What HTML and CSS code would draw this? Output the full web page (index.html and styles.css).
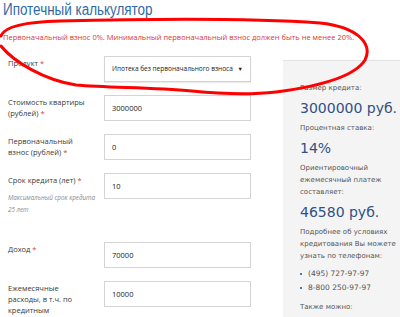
FILE: index.html
```html
<!DOCTYPE html>
<html lang="ru">
<head>
    <meta charset="utf-8">
    <title>Ипотечный калькулятор</title>
    <link rel="stylesheet" href="styles.css">
</head>
<body>
    <div class="page">
        <h1 class="title"><span>Ипотечный калькулятор</span></h1>
        <p class="error">Первоначальный взнос 0%. Минимальный первоначальный взнос должен быть не менее 20%.</p>

        <div class="main">
            <div class="form">
                <div class="row">
                    <label class="lbl">Продукт <span class="req">*</span></label>
                    <div class="select"><span>Ипотека без первоначального взноса</span><span class="arrow">&#9660;</span></div>
                </div>
                <div class="row">
                    <label class="lbl">Стоимость квартиры (рублей) <span class="req">*</span></label>
                    <div class="input">3000000</div>
                </div>
                <div class="row">
                    <label class="lbl">Первоначальный взнос (рублей) <span class="req">*</span></label>
                    <div class="input">0</div>
                </div>
                <div class="row row-hint">
                    <div class="lbl">
                        <label>Срок кредита (лет) <span class="req">*</span></label>
                        <p class="hint">Максимальный срок кредита<br>25 лет</p>
                    </div>
                    <div class="input">10</div>
                </div>
                <div class="row">
                    <label class="lbl">Доход <span class="req">*</span></label>
                    <div class="input">70000</div>
                </div>
                <div class="row">
                    <label class="lbl">Ежемесячные расходы, в т.ч. по кредитным обязательствам <span class="req">*</span></label>
                    <div class="input">10000</div>
                </div>
            </div>

            <div class="side">
                <p class="s-text">Размер кредита:</p>
                <p class="s-big">3000000 руб.</p>
                <p class="s-text">Процентная ставка:</p>
                <p class="s-big">14%</p>
                <p class="s-text">Ориентировочный ежемесячный платеж составляет:</p>
                <p class="s-big">46580 руб.</p>
                <p class="s-text">Подробнее об условиях кредитования Вы можете узнать по телефонам:</p>
                <ul class="phones">
                    <li>(495) 727-97-97</li>
                    <li>8-800 250-97-97</li>
                </ul>
                <p class="s-text">Также можно:</p>
            </div>
        </div>

        <svg class="scribble" width="400" height="110" viewBox="0 0 400 110">
            <path d="M 1,36 C 4,27 22,22 60,21 C 140,19 250,18 320,23 C 358,27 373,44 365,60 C 355,76 322,86 276,92 C 250,95 222,94 192,91 C 150,87 110,88 76,85 C 44,80 14,62 1,46"
                  fill="none" stroke="#ff0000" stroke-width="3" stroke-linecap="round"/>
        </svg>
    </div>
</body>
</html>
```

FILE: styles.css
```css
body{
    margin: 0;
    font-family: 'Open Sans', sans-serif;
    background: #fff;
    overflow: hidden;
}
.page{
    position: relative;
    width: 400px;
    height: 317px;
    overflow: hidden;
}
.title{
    margin: 0;
    padding-left: 3px;
    font-family: 'Liberation Sans', Arial, sans-serif;
    font-weight: 400;
    font-size: 16px;
    line-height: 20px;
    color: #2f6aa6;
    white-space: nowrap;
}
.title span{
    display: inline-block;
    transform: scaleX(0.84);
    transform-origin: left center;
}
.error{
    margin: 12px 0 0 3px;
    font-size: 7.5px;
    line-height: 10px;
    color: #d6393b;
    white-space: nowrap;
}
.main{
    display: flex;
    margin-top: 14px;
}
.form{
    width: 283px;
    flex-shrink: 0;
}
.row{
    display: flex;
    margin-bottom: 13px;
}
.row-hint{
    margin-bottom: 26px;
}
.lbl{
    box-sizing: border-box;
    width: 104px;
    padding: 2px 13px 0 8px;
    font-size: 7.5px;
    line-height: 11px;
    color: #3a3a3a;
    flex-shrink: 0;
}
.req{
    color: #e0393b;
}
.hint{
    margin: 6px 0 0;
    font-size: 6.3px;
    line-height: 12px;
    font-style: italic;
    color: #8a8a8a;
    white-space: nowrap;
}
.select, .input{
    box-sizing: border-box;
    width: 147px;
    height: 26px;
    border: 1px solid #d4d4d4;
    padding: 0 7px;
    font-size: 7.5px;
    line-height: 24px;
    color: #222;
}
.select{
    display: flex;
    justify-content: space-between;
    font-size: 6.5px;
    white-space: nowrap;
    box-shadow: 0 1px 1px rgba(0,0,0,0.08);
}
.arrow{
    font-size: 5.5px;
}
.side{
    flex: 1;
    margin-top: 4px;
    padding: 21px 0 0 17px;
    background: #f4f4f4;
    border-top: 1px solid #e2e2e2;
    font-family: 'DejaVu Sans', sans-serif;
}
.s-text{
    margin: 0 0 5px;
    font-size: 7px;
    line-height: 12px;
    color: #555;
}
.s-big{
    margin: 0 0 5px;
    font-size: 14px;
    line-height: 18px;
    color: #2f5188;
}
.phones{
    margin: 4px 0 6px;
    padding: 0;
    list-style: none;
}
.phones li{
    position: relative;
    padding-left: 8px;
    font-size: 7.5px;
    line-height: 14px;
    color: #555;
}
.phones li::before{
    content: "";
    position: absolute;
    left: 0;
    top: 6px;
    width: 2px;
    height: 2px;
    background: #4a78b8;
}
.scribble{
    position: absolute;
    left: 0;
    top: 0;
}
```
